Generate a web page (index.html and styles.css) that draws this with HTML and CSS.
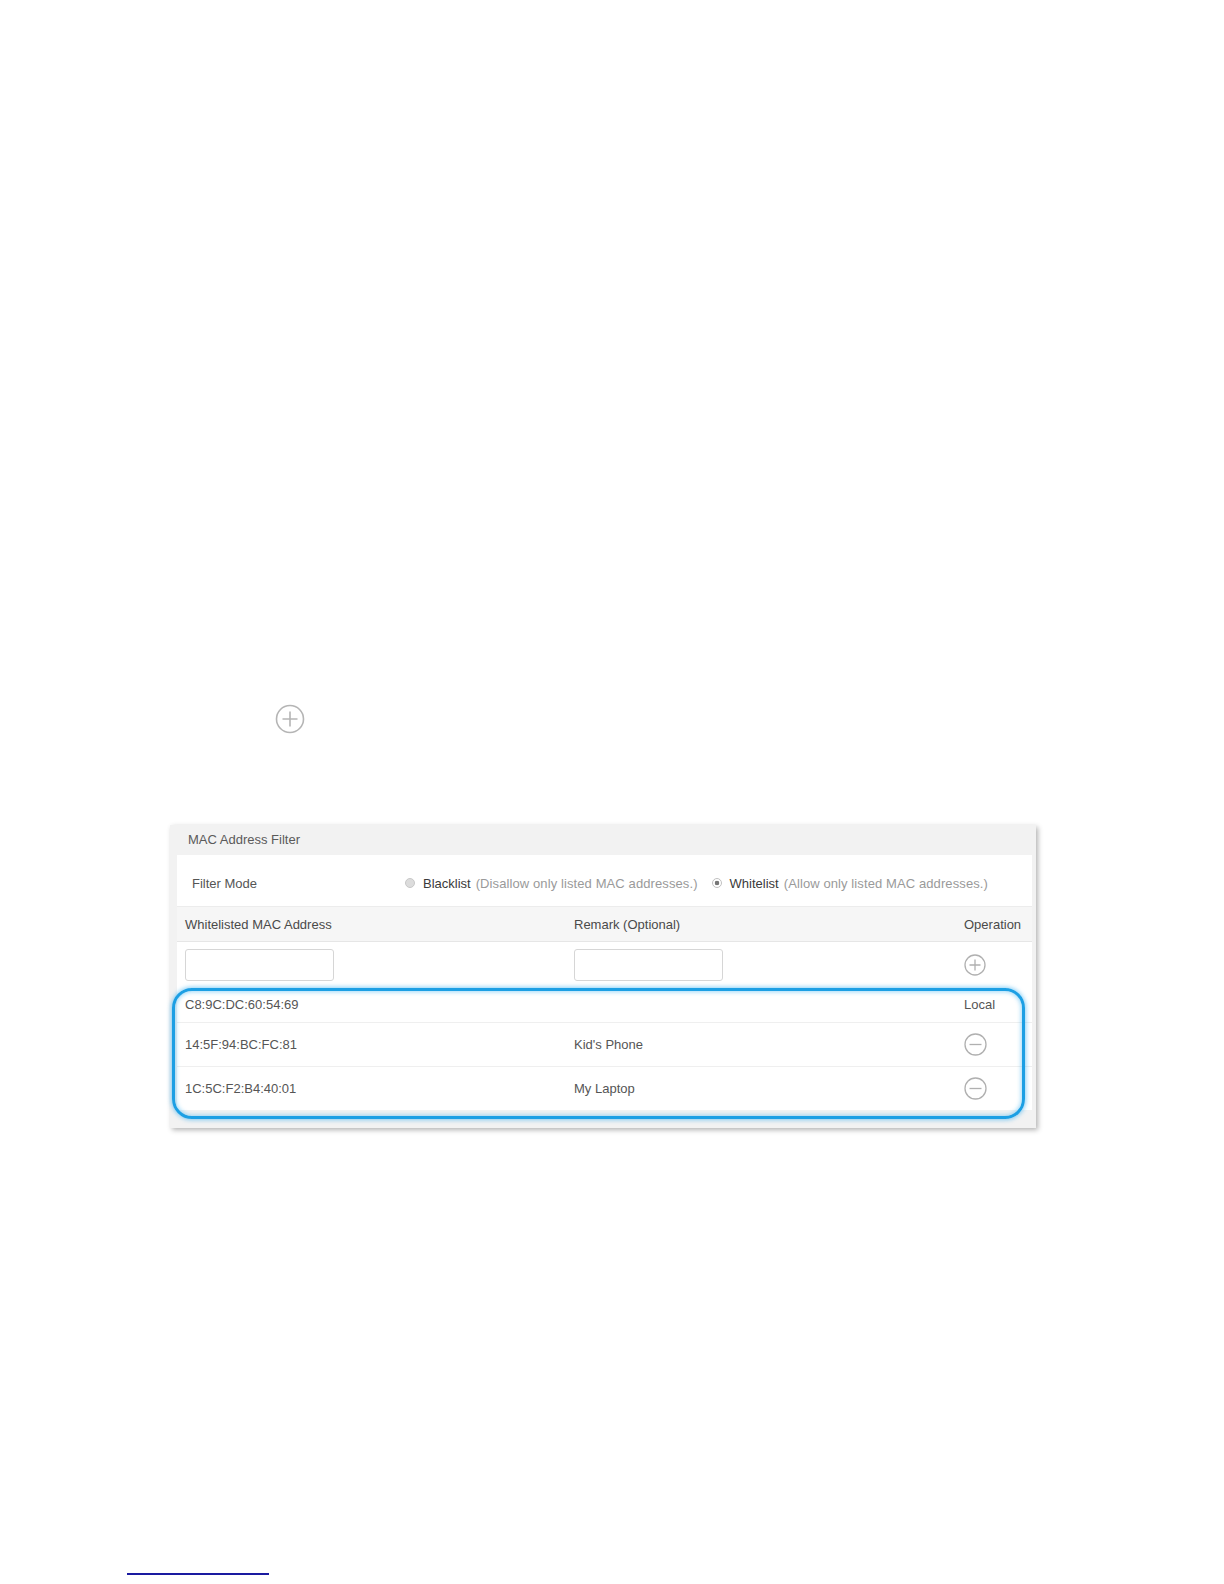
FILE: index.html
```html
<!DOCTYPE html>
<html>
<head>
<meta charset="utf-8">
<link rel="stylesheet" href="styles.css">
</head>
<body>
<div class="doc">
  <div class="big-add">
    <svg width="30" height="30" viewBox="0 0 30 30"><circle cx="15" cy="15" r="13.5" fill="none" stroke="#b5b5b5" stroke-width="1.6"/><path d="M15 7.5v15M7.5 15h15" stroke="#b5b5b5" stroke-width="1.6"/></svg>
  </div>

  <div class="panel">
    <div class="panel-title">MAC Address Filter</div>
    <div class="panel-body">
      <div class="mode-row">
        <span class="mode-label">Filter Mode</span>
        <span class="mode-options">
          <span class="radio radio-off"></span><span class="opt-name">Blacklist</span><span class="opt-desc">(Disallow only listed MAC addresses.)</span>
          <span class="radio radio-on"></span><span class="opt-name">Whitelist</span><span class="opt-desc">(Allow only listed MAC addresses.)</span>
        </span>
      </div>
      <div class="trow thead">
        <div class="cell">Whitelisted MAC Address</div>
        <div class="cell">Remark (Optional)</div>
        <div class="cell">Operation</div>
      </div>
      <div class="trow tinput">
        <div class="cell"><span class="box-input"></span></div>
        <div class="cell"><span class="box-input"></span></div>
        <div class="cell">
          <svg class="op-icon" width="22" height="22" viewBox="0 0 22 22"><circle cx="11" cy="11" r="10" fill="none" stroke="#b0b0b0" stroke-width="1.3"/><path d="M11 5.5v11M5.5 11h11" stroke="#b0b0b0" stroke-width="1.3"/></svg>
        </div>
      </div>
      <div class="trow tdata r1">
        <div class="cell">C8:9C:DC:60:54:69</div>
        <div class="cell"></div>
        <div class="cell">Local</div>
      </div>
      <div class="trow tdata r2">
        <div class="cell">14:5F:94:BC:FC:81</div>
        <div class="cell">Kid's Phone</div>
        <div class="cell"><svg class="op-icon" width="23" height="23" viewBox="0 0 23 23"><circle cx="11.5" cy="11.5" r="10.5" fill="none" stroke="#b0b0b0" stroke-width="1.3"/><path d="M5.5 11.5h12" stroke="#b0b0b0" stroke-width="1.3"/></svg></div>
      </div>
      <div class="trow tdata r3">
        <div class="cell">1C:5C:F2:B4:40:01</div>
        <div class="cell">My Laptop</div>
        <div class="cell"><svg class="op-icon" width="23" height="23" viewBox="0 0 23 23"><circle cx="11.5" cy="11.5" r="10.5" fill="none" stroke="#b0b0b0" stroke-width="1.3"/><path d="M5.5 11.5h12" stroke="#b0b0b0" stroke-width="1.3"/></svg></div>
      </div>
    </div>
    <div class="highlight"></div>
  </div>

  <div class="foot-line"></div>
</div>
</body>
</html>
```
FILE: styles.css
```css
html, body {
  margin: 0;
  padding: 0;
  background: #ffffff;
}
.doc {
  width: 1224px;
  height: 1584px;
  font-family: "Liberation Sans", Arial, sans-serif;
  padding-top: 704px;
  box-sizing: border-box;
}
.big-add {
  margin-left: 275px;
  width: 30px;
  height: 30px;
}
.big-add svg { display: block; }

.panel {
  position: relative;
  margin-top: 91px;
  margin-left: 170px;
  width: 866px;
  background: #f2f2f2;
  box-shadow: 2px 2px 5px rgba(0, 0, 0, 0.3);
  padding: 0 4px 18px 7px;
  box-sizing: border-box;
  font-size: 13px;
  color: #555;
}
.panel-title {
  height: 30px;
  line-height: 30px;
  padding-left: 18px;
  margin-left: -7px;
  color: #5a5a5a;
}
.panel-body {
  background: #fff;
}
.mode-row {
  height: 52px;
  display: flex;
  align-items: center;
  padding-left: 15px;
  padding-top: 5px;
  border-bottom: 1px solid #ececec;
  box-sizing: border-box;
}
.mode-label {
  width: 213px;
  color: #555;
}
.mode-options {
  display: flex;
  align-items: center;
}
.radio {
  width: 10px;
  height: 10px;
  border-radius: 50%;
  box-sizing: border-box;
  margin-right: 8px;
}
.radio-off {
  background: #dcdcdc;
  border: 1px solid #c8c8c8;
}
.radio-on {
  background: radial-gradient(circle, #777 0 2px, #fff 2.6px);
  border: 1px solid #c0c0c0;
  margin-left: 14px;
}
.opt-name {
  color: #3a3a3a;
  margin-right: 5px;
}
.opt-desc {
  color: #9a9a9a;
  letter-spacing: 0.1px;
}
.trow {
  display: grid;
  grid-template-columns: 389px 390px 1fr;
  align-items: center;
}
.cell {
  padding: 0 8px;
}
.thead {
  height: 35px;
  background: #f6f6f6;
  border-bottom: 1px solid #e6e6e6;
  box-sizing: border-box;
  color: #4a4a4a;
}
.tinput {
  height: 45px;
}
.box-input {
  display: block;
  width: 149px;
  height: 32px;
  border: 1px solid #d6d6d6;
  border-radius: 3px;
  box-sizing: border-box;
  margin-top: 1px;
}
.op-icon {
  display: block;
}
.tdata {
  border-bottom: 1px solid #efefef;
  box-sizing: border-box;
  color: #555;
}
.r1 { height: 36px; }
.r2 { height: 44px; }
.r3 { height: 43px; border-bottom: none; }
.highlight {
  position: absolute;
  left: 2px;
  top: 163px;
  width: 853px;
  height: 131px;
  border: 3px solid #1c9fe4;
  border-radius: 20px;
  box-sizing: border-box;
  box-shadow: 0 0 4px 1px rgba(40, 170, 240, 0.55), inset 0 0 4px 1px rgba(40, 170, 240, 0.45);
  pointer-events: none;
}
.foot-line {
  margin-top: 445px;
  margin-left: 127px;
  width: 142px;
  height: 0;
  border-top: 2px solid #1a1aa0;
}
```
